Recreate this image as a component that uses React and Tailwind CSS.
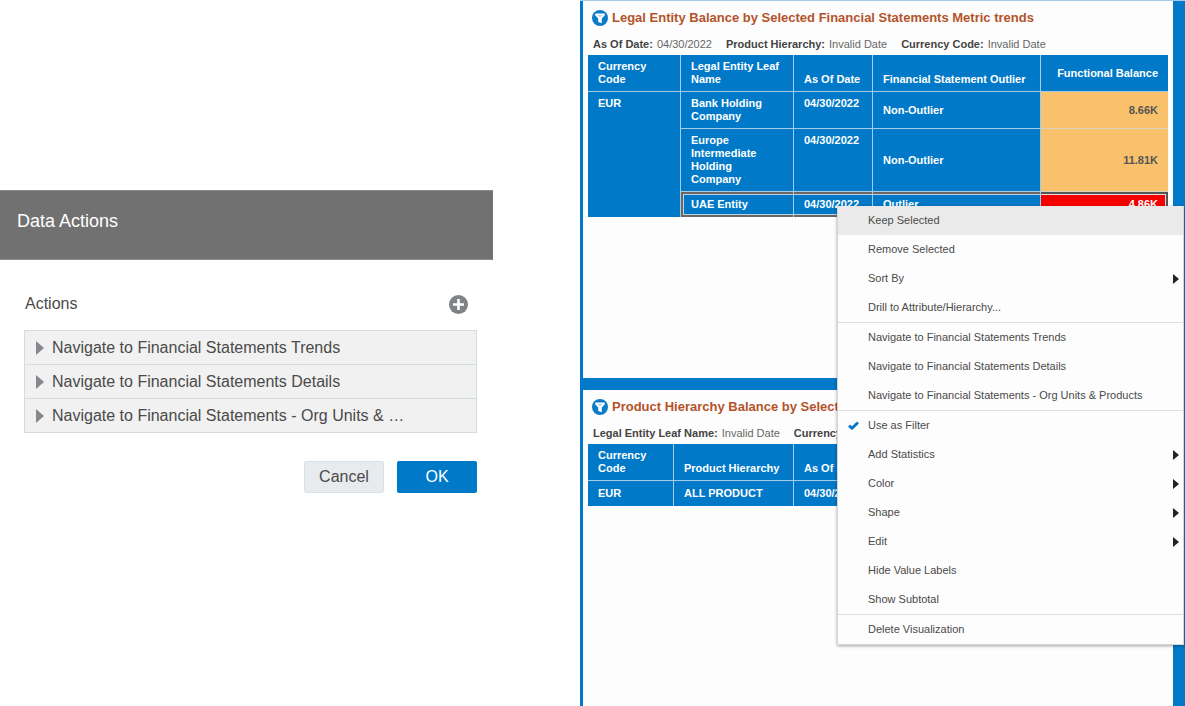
import React from "react";

const dataActions = [
  "Navigate to Financial Statements Trends",
  "Navigate to Financial Statements Details",
  "Navigate to Financial Statements - Org Units & …",
];

const menuGroups = [
  [
    { label: "Keep Selected", active: true },
    { label: "Remove Selected" },
    { label: "Sort By", submenu: true },
    { label: "Drill to Attribute/Hierarchy..." },
  ],
  [
    { label: "Navigate to Financial Statements Trends" },
    { label: "Navigate to Financial Statements Details" },
    { label: "Navigate to Financial Statements - Org Units & Products" },
  ],
  [
    { label: "Use as Filter", checked: true },
    { label: "Add Statistics", submenu: true },
    { label: "Color", submenu: true },
    { label: "Shape", submenu: true },
    { label: "Edit", submenu: true },
    { label: "Hide Value Labels" },
    { label: "Show Subtotal" },
  ],
  [{ label: "Delete Visualization" }],
];

const FilterIcon = () => (
  <svg className="size-4 shrink-0" viewBox="0 0 16 16" aria-hidden="true">
    <circle cx="8" cy="8" r="8" fill="#0a7bc4" />
    <path d="M3.2 3.6h9.6v1.6L9.8 8.6v4.6L6.2 12V8.6l-3-3.4z" fill="#fff" />
    <path d="M5.4 5h5.2L8 7.6z" fill="#b5d7ed" />
  </svg>
);

const DataActionsDialog = () => (
  <section className="mt-[190px] w-[493px] shrink-0 self-start">
    <header className="border-y border-[#8c8c8c] bg-[#717171] px-[17px] pt-[18px] pb-[26px]">
      <h1 className="text-[18px] leading-6 text-white">Data Actions</h1>
    </header>
    <div className="pt-[34px] pr-4 pl-6 text-[16px] text-[#4a4a4a]">
      <div className="flex items-center justify-between pr-[9px] pl-px leading-5">
        <h2>Actions</h2>
        <button type="button" aria-label="Add action">
          <svg className="size-[19px]" viewBox="0 0 19 19" aria-hidden="true">
            <circle cx="9.5" cy="9.5" r="9.5" fill="#7f8388" />
            <path d="M9.5 4v11M4 9.5h11" stroke="#fff" strokeWidth="2.6" />
          </svg>
        </button>
      </div>
      <ul className="mt-4 border-x border-t border-[#d3dce3] bg-[#f1f1f1]">
        {dataActions.map((action) => (
          <li key={action} className="border-b border-[#d3dce3]">
            <button
              type="button"
              className="flex h-[33px] w-full items-center gap-2 pl-[11px] text-left"
            >
              <svg className="h-[14px] w-2" viewBox="0 0 8 14" aria-hidden="true">
                <path d="M0 0l8 7-8 7z" fill="#85898e" />
              </svg>
              {action}
            </button>
          </li>
        ))}
      </ul>
      <div className="mt-7 flex justify-end gap-[13px]">
        <button
          type="button"
          className="h-8 w-20 rounded-xs border border-[#d9e0e6] bg-[#e8ebee]"
        >
          Cancel
        </button>
        <button
          type="button"
          className="h-8 w-20 rounded-xs bg-[#0079c8] text-white"
        >
          OK
        </button>
      </div>
    </div>
  </section>
);

const Card = ({ title, filters, children }) => (
  <article className="overflow-hidden bg-[#fdfdfd] px-[5px] pt-2">
    <div className="flex h-[17px] items-center gap-1 pl-1">
      <FilterIcon />
      <h2 className="text-[13px] font-bold whitespace-nowrap text-[#b4532a]">
        {title}
      </h2>
    </div>
    <dl className="mt-3 mb-1 flex gap-[14px] pl-[5px] text-[11px] leading-[13px] whitespace-nowrap">
      {filters.map(([name, value]) => (
        <div key={name} className="flex gap-1">
          <dt className="font-bold text-[#444]">{name}:</dt>
          <dd className="text-[#666]">{value}</dd>
        </div>
      ))}
    </dl>
    {children}
  </article>
);

const headCell =
  "border-r border-b border-[#a5cbe6] px-[10px] py-[5px] text-left align-bottom";
const rowCell =
  "border-r border-b border-[#a5cbe6] px-[10px] py-[5px] text-left align-top";
const midCell =
  "border-r border-b border-[#a5cbe6] px-[10px] py-[5px] text-left align-middle";
const balanceCell =
  "border-b border-[#d9d3c4] bg-[#f9c16c] px-[10px] py-[5px] text-right align-middle text-[#555]";
// dark frame with a light line inside it, drawn cell by cell
const selectedCell =
  "border-r border-[#a5cbe6] px-[10px] py-[6px] shadow-[inset_0_2px_0_#6e6661,inset_0_-2px_0_#6e6661,inset_0_3px_0_#b9d3e6,inset_0_-3px_0_#b9d3e6]";

const LegalEntityTable = () => (
  <table className="w-full table-fixed border-separate border-spacing-0 bg-[#0079c8] text-[11px] leading-[13px] font-bold text-white">
    <thead>
      <tr>
        <th className={`${headCell} w-[93px]`}>Currency Code</th>
        <th className={`${headCell} w-[113px]`}>Legal Entity Leaf Name</th>
        <th className={`${headCell} w-[79px]`}>As Of Date</th>
        <th className={`${headCell} w-[168px]`}>Financial Statement Outlier</th>
        <th className="border-b border-[#a5cbe6] px-[10px] py-[5px] text-right align-middle whitespace-nowrap">
          Functional Balance
        </th>
      </tr>
    </thead>
    <tbody>
      <tr>
        <th
          rowSpan={3}
          className="border-r border-[#a5cbe6] px-[10px] py-[5px] text-left align-top"
        >
          EUR
        </th>
        <th className={rowCell}>Bank Holding Company</th>
        <td className={rowCell}>04/30/2022</td>
        <td className={midCell}>Non-Outlier</td>
        <td className={balanceCell}>8.66K</td>
      </tr>
      <tr>
        <th className={rowCell}>Europe Intermediate Holding Company</th>
        <td className={rowCell}>04/30/2022</td>
        <td className={midCell}>Non-Outlier</td>
        <td className={balanceCell}>11.81K</td>
      </tr>
      <tr>
        <th className="border-r border-[#a5cbe6] px-[10px] py-[6px] text-left shadow-[inset_2px_2px_0_#6e6661,inset_0_-2px_0_#6e6661,inset_3px_3px_0_#b9d3e6,inset_0_-3px_0_#b9d3e6]">
          UAE Entity
        </th>
        <td className={selectedCell}>04/30/2022</td>
        <td className={selectedCell}>Outlier</td>
        <td className="bg-[#f50000] px-[10px] py-[6px] text-right shadow-[inset_-2px_2px_0_#555,inset_0_-2px_0_#555,inset_-3px_3px_0_#e6dede,inset_0_-3px_0_#e6dede]">
          4.86K
        </td>
      </tr>
    </tbody>
  </table>
);

const ProductTable = () => (
  <table className="w-full table-fixed border-separate border-spacing-0 bg-[#0079c8] text-[11px] leading-[13px] font-bold text-white">
    <thead>
      <tr>
        <th className={`${headCell} w-[86px]`}>Currency Code</th>
        <th className={`${headCell} w-[120px] whitespace-nowrap`}>
          Product Hierarchy
        </th>
        <th className={headCell}>As Of Date</th>
      </tr>
    </thead>
    <tbody>
      <tr>
        <th className="border-r border-[#a5cbe6] px-[10px] py-[6px] text-left">
          EUR
        </th>
        <th className="border-r border-[#a5cbe6] px-[10px] py-[6px] text-left">
          ALL PRODUCT
        </th>
        <td className="px-[10px] py-[6px]">04/30/2022</td>
      </tr>
    </tbody>
  </table>
);

const MenuItem = ({ label, active, checked, submenu }) => (
  <button
    type="button"
    role="menuitem"
    className={`flex h-[29px] w-full items-center pr-1 pl-[10px] text-left ${
      active ? "bg-[#eaeaea]" : ""
    }`}
  >
    <span className="w-5 shrink-0">
      {checked && (
        <svg className="h-[9px] w-[11px]" viewBox="0 0 11 9" aria-hidden="true">
          <path
            d="M1 4.6l3 2.6L10 1.4"
            fill="none"
            stroke="#0079c8"
            strokeWidth="2.8"
          />
        </svg>
      )}
    </span>
    <span className="flex-1 whitespace-nowrap">{label}</span>
    {submenu && (
      <svg className="h-[10px] w-[6px]" viewBox="0 0 6 10" aria-hidden="true">
        <path d="M0 0l6 5-6 5z" fill="#222" />
      </svg>
    )}
  </button>
);

const ContextMenu = () => (
  <div
    role="menu"
    className="absolute top-[205px] right-px w-[347px] border-x border-b border-[#d6d6d6] bg-[#fdfdfd] text-[11px] text-[#4a4a4a] shadow-[0_1px_3px_rgba(0,0,0,0.35)]"
  >
    {menuGroups.map((group, i) => (
      <div key={i} className={i > 0 ? "border-t border-[#dedede]" : ""}>
        {group.map((item) => (
          <MenuItem key={item.label} {...item} />
        ))}
      </div>
    ))}
  </div>
);

const App = () => {
  return (
    <div className="flex min-h-screen gap-[87px] bg-white font-['Liberation_Sans',Arial,sans-serif]">
      <DataActionsDialog />
      <main className="relative grid min-w-0 flex-1 grid-rows-[377fr_316fr] gap-3 border-t border-[#a5cbe6] bg-[#0079c8] pr-3 pl-[3px]">
        <Card
          title="Legal Entity Balance by Selected Financial Statements Metric trends"
          filters={[
            ["As Of Date", "04/30/2022"],
            ["Product Hierarchy", "Invalid Date"],
            ["Currency Code", "Invalid Date"],
          ]}
        >
          <LegalEntityTable />
        </Card>
        <Card
          title="Product Hierarchy Balance by Selected"
          filters={[
            ["Legal Entity Leaf Name", "Invalid Date"],
            ["Currency", ""],
          ]}
        >
          <ProductTable />
        </Card>
        <ContextMenu />
      </main>
    </div>
  );
};

export default App;
